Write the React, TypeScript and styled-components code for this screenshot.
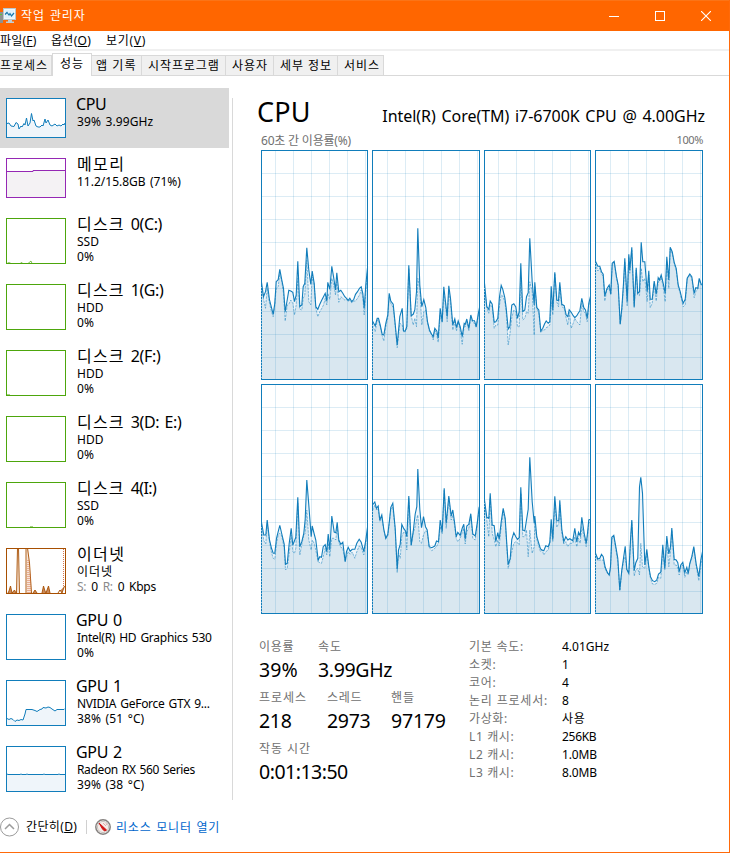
import React from 'react';
import styled, { createGlobalStyle } from 'styled-components';

const GlobalStyle = createGlobalStyle`
  * { box-sizing: border-box; }
  body { margin: 0; background: #fff; }
`;

const Window = styled.div`
  width: 730px;
  height: 853px;
  display: flex;
  flex-direction: column;
  overflow: hidden;
  background: #fff;
  border-right: 1px solid #ff6a0a;
  border-bottom: 1px solid #ff6a0a;
  font-family: 'Noto Sans', 'Noto Sans CJK KR', sans-serif;
  font-size: 12px;
  color: #000;
  white-space: pre;
`;

const Txt = styled.span<{ $ls?: number }>`
  letter-spacing: ${(p) => p.$ls ?? 0}px;
`;

const TitleBar = styled.header`
  height: 31px;
  flex: none;
  display: flex;
  align-items: center;
  background: #ff6600;
  border-top: 1px solid #fb7417;
  color: #fff;
`;

const TitleText = styled.h1`
  margin: 0 0 0 5px;
  flex: 1;
  font-size: 12px;
  font-weight: 400;
  line-height: 18px;
  letter-spacing: 0.9px;
  word-spacing: 1px;
`;

const Controls = styled.div`
  display: flex;
`;

const ControlButton = styled.button`
  width: 46px;
  height: 30px;
  padding: 0;
  border: 0;
  display: flex;
  align-items: center;
  justify-content: center;
  background: none;
`;

const MenuBar = styled.nav`
  height: 20px;
  flex: none;
  display: flex;
  border-bottom: 2px solid #f0f0f0;
  line-height: 19px;
`;

const MenuItem = styled.span<{ $w: number; $ls: number }>`
  width: ${(p) => p.$w}px;
  letter-spacing: ${(p) => p.$ls}px;
  flex: none;
`;

const Tabs = styled.div`
  height: 25px;
  flex: none;
  display: flex;
  align-items: flex-end;
  border-bottom: 1px solid #d9d9d9;
`;

const Tab = styled.div<{ $w: number; $active?: boolean; $pad: number; $ls: number }>`
  width: ${(p) => p.$w}px;
  height: ${(p) => (p.$active ? 23 : 20)}px;
  margin-bottom: ${(p) => (p.$active ? -1 : 0)}px;
  padding-left: ${(p) => p.$pad}px;
  border: 1px solid #d9d9d9;
  border-bottom: 0;
  border-left-width: ${(p) => (p.$active ? 1 : 0)}px;
  background: ${(p) => (p.$active ? '#fff' : '#f0f0f0')};
  letter-spacing: ${(p) => p.$ls}px;
  line-height: ${(p) => (p.$active ? 20 : 19)}px;
`;

const Body = styled.div`
  flex: none;
  height: 724px;
  display: flex;
`;

const Sidebar = styled.aside`
  width: 233px;
  flex: none;
  padding: 12px 3px 0 0;
  background: linear-gradient(#d9d9d9, #d9d9d9) 232px 22px / 1px 702px no-repeat;
`;

const Item = styled.div<{ $h: number; $selected?: boolean }>`
  width: 229px;
  height: ${(p) => p.$h}px;
  padding: 10px 0 0 6px;
  display: flex;
  gap: 11px;
  background: ${(p) => (p.$selected ? '#d9d9d9' : 'transparent')};
`;

const ItemText = styled.div`
  margin-top: -4px;
  flex: 1;
  word-spacing: 1.2px;
`;

const ItemTitle = styled.div<{ $ls: number; $shift?: number }>`
  margin-left: ${(p) => p.$shift ?? 0}px;
  font-size: 16px;
  line-height: 20px;
  letter-spacing: ${(p) => p.$ls}px;
`;

const Hangul = styled.span`
  letter-spacing: 1.2px;
  word-spacing: 0.5px;
`;

const ItemLine = styled.div<{ $ls: number }>`
  font-size: 12px;
  line-height: 15px;
  letter-spacing: ${(p) => p.$ls}px;
`;

const Rates = styled.span`
  word-spacing: 2.1px;
`;

const Muted = styled.span`
  color: #8a8a8a;
`;

const Svg = styled.svg`
  display: block;
  flex: none;
`;

const Main = styled.main`
  flex: 1;
  padding: 18px 0 0 28px;
`;

const Heading = styled.div`
  width: 446px;
  height: 38px;
  margin-left: -3px;
  display: flex;
  align-items: baseline;
  justify-content: space-between;
  line-height: 36px;
`;

const HeadingTitle = styled.h2`
  margin: 0 0 0 -1px;
  font-size: 27px;
  font-weight: 400;
  letter-spacing: 0.2px;
`;

const HeadingModel = styled.span`
  margin-right: -1px;
  font-size: 16px;
  word-spacing: 1.6px;
  letter-spacing: -0.04px;
`;

const AxisLabels = styled.div`
  width: 442px;
  height: 18px;
  display: flex;
  justify-content: space-between;
  color: #707070;
  line-height: 17px;
  font-size: 12px;
`;

const AxisMax = styled.span`
  font-size: 11px;
  line-height: 16px;
  letter-spacing: -0.4px;
`;

const Charts = styled.div`
  display: grid;
  grid-template-columns: 107px 108px 107px 108px;
  gap: 4px;
`;

const Details = styled.div`
  margin: 24px 0 0 -2px;
  display: flex;
`;

const Stats = styled.div`
  width: 210px;
`;

const StatRow = styled.div`
  height: 51px;
  display: flex;
`;

const Stat = styled.div<{ $w: number }>`
  width: ${(p) => p.$w}px;
`;

const StatLabel = styled.div<{ $ls: number }>`
  height: 18px;
  line-height: 17px;
  color: #707070;
  letter-spacing: ${(p) => p.$ls}px;
`;

const StatValue = styled.div<{ $ls: number }>`
  height: 30px;
  font-size: 19.5px;
  line-height: 27px;
  letter-spacing: ${(p) => p.$ls}px;
`;

const Facts = styled.div`
  display: grid;
  grid-template-columns: 93px auto;
  grid-auto-rows: 18px;
  line-height: 18px;
`;

const FactLabel = styled.span<{ $ls: number }>`
  color: #707070;
  letter-spacing: ${(p) => p.$ls}px;
`;

const Footer = styled.footer`
  flex: 1;
  display: flex;
  align-items: center;
  padding-top: 2px;
`;

const Fewer = styled.span`
  width: 61px;
  margin-left: 7px;
  letter-spacing: 0.35px;
  border-right: 1px solid #d0d0d0;
  height: 14px;
  line-height: 14px;
`;

const MonitorLink = styled.a`
  margin-left: 5px;
  color: #0066cc;
  letter-spacing: 0.8px;
  word-spacing: 0.8px;
`;

/* Samples are "x,utilisation,kernel" triples in thirds of a pixel. */
type ChartData = { w: number; ox: number; oy: number; grid: number; data: string };

const charts: ChartData[] = [
  { w: 107, ox: 18, oy: 15, grid: 14, data: '18,412,425 24,455,462 30,440,490 35,412,430 42,465,475 48,488,500 53,508,515 58,475,480 62,410,430 68,404,425 73,373,385 79,405,410 84,430,445 89,500,528 95,465,480 100,436,478 106,438,465 112,442,475 117,470,510 122,450,480 127,349,400 133,485,492 139,480,495 143,425,460 148,415,450 154,308,345 160,375,470 166,418,480 170,378,395 176,415,420 181,485,490 187,493,515 193,478,500 199,465,490 204,455,480 209,445,460 214,468,480 217,412,445 223,433,463 229,364,400 235,400,420 240,435,450 244,383,410 250,440,472 256,436,455 262,445,460 268,455,465 273,460,463 278,466,470 283,460,465 289,470,473 295,463,468 300,448,468 306,440,460 312,430,450 317,425,435 322,445,455 326,490,510 331,420,440 336,368,380' },
  { w: 108, ox: 15, oy: 15, grid: 15, data: '15,528,540 23,543,560 29,520,525 33,520,525 38,540,545 44,568,572 49,570,588 55,535,545 61,510,518 65,445,452 70,468,475 77,478,488 82,525,530 89,600,608 97,515,535 104,490,540 108,558,560 113,558,560 118,545,550 124,361,370 131,512,512 137,508,540 142,495,520 147,440,545 151,250,400 157,420,430 163,485,540 169,464,500 175,488,495 180,530,535 186,555,560 192,567,568 197,575,585 202,550,555 208,558,570 212,580,592 218,490,510 224,530,533 229,425,440 234,470,480 239,515,530 244,422,435 249,460,470 256,540,555 262,522,530 267,548,558 272,528,530 278,545,555 284,575,598 290,535,540 293,538,545 298,522,528 304,550,558 310,510,515 315,527,532 321,527,535 326,545,548 332,508,515 336,488,493' },
  { w: 107, ox: 15, oy: 15, grid: 14, data: '15,415,430 22,485,488 28,493,505 32,468,480 38,478,485 44,532,550 49,530,540 55,520,540 60,455,480 65,421,450 70,433,453 76,458,470 80,490,500 86,552,600 91,545,570 97,480,518 103,476,495 109,486,500 114,520,545 119,500,545 124,355,400 130,500,525 136,495,520 141,455,500 146,443,505 151,280,410 158,410,440 164,480,570 166,412,425 172,488,490 178,495,505 184,558,563 190,550,555 195,537,555 200,528,548 206,535,545 211,530,540 215,424,470 220,495,510 226,382,385 232,465,470 237,467,485 241,412,425 247,478,485 254,482,490 260,510,520 265,515,540 269,494,502 275,502,550 281,512,535 286,518,520 292,512,530 297,503,535 301,498,540 307,460,475 313,488,500 318,495,505 323,520,530 328,475,482 333,454,460' },
  { w: 108, ox: 12, oy: 15, grid: 15, data: '12,349,355 19,364,378 25,364,370 30,380,386 35,388,395 40,453,468 46,432,435 53,420,430 58,447,450 62,355,360 68,349,353 75,395,400 80,420,425 86,538,538 91,490,498 96,415,425 100,340,350 107,470,483 112,328,335 115,375,385 121,307,315 128,485,488 134,368,375 139,445,450 144,440,452 149,292,370 154,350,410 160,350,400 167,440,470 172,377,390 176,463,488 182,463,475 188,408,415 194,448,468 200,398,410 204,405,410 209,390,398 215,415,425 221,445,470 226,335,350 232,405,430 236,307,312 242,320,325 248,352,355 254,370,376 260,420,425 266,440,445 271,460,468 275,475,485 281,463,480 287,400,402 295,387,390 301,395,400 308,445,458 313,428,440 319,430,432 323,400,405 329,418,420 333,418,420' },
  { w: 107, ox: 18, oy: 12, grid: 14, data: '18,428,440 25,465,482 31,465,492 35,420,430 42,480,485 48,505,518 53,520,535 58,520,538 63,475,490 68,455,465 73,436,460 79,462,468 86,492,505 90,553,570 95,550,565 101,490,520 107,445,465 112,495,515 117,482,520 121,472,505 127,352,370 133,500,525 139,485,493 145,460,465 149,418,460 154,300,390 160,375,480 167,470,510 170,438,480 176,462,490 181,480,510 188,540,545 193,530,548 198,532,550 203,500,530 209,494,505 214,515,525 218,462,490 223,510,530 229,408,475 236,456,475 241,458,480 245,427,440 250,480,487 256,493,502 262,487,505 269,545,545 273,515,530 278,502,515 284,514,523 290,508,516 298,508,535 304,490,515 311,478,498 317,487,502 325,515,525 331,480,490 336,442,455' },
  { w: 108, ox: 351, oy: 12, grid: 15, data: '351,375,392 358,366,375 363,385,390 368,378,385 373,420,425 379,405,412 385,448,450 391,475,475 397,463,468 402,420,425 406,382,388 412,370,380 419,445,450 425,568,578 429,510,518 434,493,535 439,433,470 445,446,455 450,453,458 454,470,510 460,348,355 467,495,498 473,455,460 479,402,440 484,380,415 487,267,405 493,388,485 498,443,490 504,410,465 510,440,452 515,450,455 521,500,502 529,503,512 538,498,505 543,483,500 549,485,488 554,420,440 560,455,462 566,325,330 572,430,445 576,390,400 580,348,355 587,408,420 592,390,405 597,425,435 602,470,475 607,457,485 614,466,475 620,445,458 625,433,445 629,478,492 634,438,455 640,433,445 646,401,410 652,462,475 659,468,480 665,430,435 671,380,385' },
  { w: 107, ox: 15, oy: 12, grid: 14, data: '15,360,368 22,412,420 28,415,470 32,340,355 38,435,460 44,437,478 49,485,500 55,458,480 59,478,498 65,425,440 71,385,395 77,415,420 82,492,500 86,554,565 92,535,540 97,478,515 103,458,490 109,470,485 114,478,488 119,473,495 124,322,340 130,450,470 136,453,470 141,420,450 146,388,530 151,232,450 158,365,520 164,430,500 166,408,430 172,470,478 178,490,498 183,507,515 188,510,510 193,512,525 199,497,515 206,500,510 211,487,490 215,418,445 220,478,485 226,349,365 232,422,442 238,422,430 241,361,375 247,448,460 253,485,492 259,470,485 265,480,500 271,476,490 280,482,490 286,445,470 292,486,500 297,457,475 302,467,490 307,412,440 314,460,472 320,490,500 324,460,470 328,420,430 333,418,425' },
  { w: 108, ox: 348, oy: 12, grid: 15, data: '348,520,525 355,537,542 361,535,540 366,523,540 371,530,540 377,562,567 384,578,580 389,585,585 393,560,568 397,472,478 403,466,470 409,500,508 415,535,545 421,630,633 427,570,575 432,535,545 437,499,530 442,568,570 448,580,580 453,480,490 457,420,425 464,572,588 469,548,570 475,535,565 480,320,585 484,292,490 489,340,560 496,555,565 502,508,520 508,560,565 513,590,595 519,602,612 526,605,613 532,600,610 537,582,592 544,577,595 550,494,510 556,565,570 562,468,480 568,522,560 573,500,515 577,444,450 584,538,555 590,540,555 595,548,565 599,575,585 604,555,562 610,547,555 616,578,592 622,562,575 626,580,585 631,550,553 637,530,535 643,500,505 650,552,558 658,590,602 664,540,555 670,515,525' },
];

function CoreChart({ w, ox, oy, grid, data }: ChartData) {
  const h = 230;
  const pts = data.split(' ').map((s) => {
    const [x, u, k] = s.split(',').map(Number);
    return { x: Math.min((x - ox) / 3 + 0.5, w - 0.5), u: (u - oy) / 3, k: (k - oy) / 3 };
  });
  const util = pts.map((p) => `${p.x.toFixed(1)},${p.u.toFixed(1)}`).join(' ');
  const kern = pts.map((p) => `${p.x.toFixed(1)},${p.k.toFixed(1)}`).join(' ');
  const base = ` ${w - 0.5},${h} 0.5,${h}`;
  const vs = [0, 1, 2, 3, 4, 5].map((i) => grid + i * 18 + 0.5);
  const hs = [1, 2, 3, 4, 5, 6, 7, 8, 9].map((i) => i * 23 + 0.5);
  return (
    <Svg width={w} height={h} viewBox={`0 0 ${w} ${h}`}>
      <rect width={w} height={h} fill="#fff" />
      <polygon points={util + base} fill="#eff5fa" />
      <polygon points={kern + base} fill="#d9e7f0" />
      <g stroke="#117dbb" strokeOpacity="0.15" shapeRendering="crispEdges">
        {vs.map((x) => <line key={x} x1={x} x2={x} y1="1" y2={h - 1} />)}
        {hs.map((y) => <line key={y} x1="1" x2={w - 1} y1={y} y2={y} />)}
      </g>
      <polyline points={kern} fill="none" stroke="#117dbb" strokeOpacity="0.5" strokeDasharray="2.5 1" />
      <polyline points={util} fill="none" stroke="#117dbb" strokeWidth="1.1" />
      <rect x="0.5" y="0.5" width={w - 1} height={h - 1} fill="none" stroke="#117dbb" />
      <line x1="0.5" x2="0.5" y1={Math.round(pts[0].k)} y2={h - 1} stroke="#8fc0dd" strokeDasharray="1 2" />
    </Svg>
  );
}

type Thumb = { h: number; color: string; fill?: string; line?: string; extra?: React.ReactNode };

function Thumbnail({ h, color, fill, line, extra }: Thumb) {
  return (
    <Svg width="60" height={h} viewBox={`0 0 60 ${h}`}>
      <rect width="60" height={h} fill="#fff" />
      {line && fill && <polygon points={`${line} 59,${h} 1,${h}`} fill={fill} />}
      {line && <polyline points={line} fill="none" stroke={color} />}
      {extra}
      <rect x="0.5" y="0.5" width="59" height={h - 1} fill="none" stroke={color} />
    </Svg>
  );
}

const BLUE = '#117dbb';
const GREEN = '#4da60c';
const BROWN = '#a74f01';

type Entry = { name: string; title: React.ReactNode; ls: number; shift?: number; lines: [React.ReactNode, number][]; thumb: Thumb };

const disk = (drive: string, ls: number, kind: string, extra?: React.ReactNode): Entry => ({
  name: drive,
  title: <><Hangul>디스크 </Hangul>{drive}</>,
  ls,
  lines: [[kind, 0], ['0%', 0.14]],
  thumb: { h: 46, color: GREEN, extra },
});

const entries: Entry[] = [
  {
    name: 'cpu', title: 'CPU', ls: -0.4, shift: -1, lines: [['39% 3.99GHz', 0.1]],
    thumb: {
      h: 40, color: BLUE, fill: '#eff5fa',
      line: '1,25.5 3,25 5,28 8,28.5 10,24.5 12,26 13,31 15,28 16,29 18,25.5 19,27 20.5,20 22,28 24,25 25.5,15.5 27,23 28,22 30,28 32,29 34,29 36,27 37,28 39,21 40,25 42,22 44,27 46,28 49,26 51,28 53,27 55,28 57,26 58,27 59,25',
    },
  },
  {
    name: 'memory', title: '메모리', ls: 1.4, lines: [['11.2/15.8GB (71%)', 0]],
    thumb: { h: 40, color: '#9528b4', fill: '#f4f2f4', line: '1,13.5 27,13.5 27,12.5 59,12.5' },
  },
  disk('0(C:)', -0.35, 'SSD', <path d="M1 45.5L3 44.5L5 45.5M14 45.5L16 44.5L17 45.5M22 45.5L25 43L26 45.5" fill="none" stroke={GREEN} strokeOpacity="0.7" />),
  disk('1(G:)', -0.4, 'HDD'),
  disk('2(F:)', -0.3, 'HDD', <path d="M1 44.5H4" stroke={GREEN} strokeOpacity="0.5" />),
  disk('3(D: E:)', -0.3, 'HDD'),
  disk('4(I:)', -0.6, 'SSD', <path d="M24 44.5H27" stroke={GREEN} strokeOpacity="0.5" />),
  {
    name: 'ethernet', title: '이더넷', ls: 1.4,
    lines: [['이더넷', 0.9], [<Rates><Muted>S:</Muted> 0 <Muted>R:</Muted> 0 Kbps</Rates>, -0.3]],
    thumb: {
      h: 46, color: BROWN,
      extra: (
        <g fill="none" stroke={BROWN}>
          <path d="M10.5 45L11 0H12.5L13.5 45ZM20.5 45V0H22L24 18L26 45Z" fill="#f7e6da" stroke="none" />
          <path d="M10.5 45L11.5 0M12.5 0L13.5 45M20 45V0M21.5 0L23.5 15L25.5 45" strokeWidth="0.9" />
          <path d="M22 45V12M24 45V25M57.5 1V38" stroke="#d4663a" strokeDasharray="1 1" strokeWidth="0.9" />
          <path d="M2 45L3 43L4.5 38L6 45L8.5 42L10 45M27 45L29 42L31 45M36 45L37.5 38L39 43L40 45L42.5 38L44 45M52 45L54 42L56 45L58.5 38" fill="#c98a5b" strokeWidth="0.9" />
        </g>
      ),
    },
  },
  { name: 'gpu0', title: 'GPU 0', ls: -0.35, shift: -1, lines: [['Intel(R) HD Graphics 530', -0.27], ['0%', 0.14]], thumb: { h: 46, color: BLUE } },
  {
    name: 'gpu1', title: 'GPU 1', ls: -0.35, shift: -1, lines: [['NVIDIA GeForce GTX 9...', -0.28], ['38% (51 °C)', 0.12]],
    thumb: {
      h: 46, color: BLUE, fill: '#eff5fa',
      line: '1,38.5 3,39.5 5,38.5 7,39.5 9,41.5 11,40 13,40.5 15,39.5 17,40 18,37 19,34 20,29.5 26,29.5 29,30.5 31,31.5 34,29.5 36,29 37,27.5 40,28 42,27 44,27.5 46,29 49,31 51,29.5 58,29.5 59,28.5',
    },
  },
  {
    name: 'gpu2', title: 'GPU 2', ls: -0.35, shift: -1, lines: [['Radeon RX 560 Series', -0.36], ['39% (38 °C)', 0.12]],
    thumb: { h: 46, color: BLUE, fill: '#eff5fa', line: '1,28 2,28.5 14,28.5 15,28 16,28.5 20,28.5 21,28 22,28.5 37,28.5 38,28 39,28.5 52,28.5 53,28 54,28.5 59,28.5' },
  },
];

const facts: [string, number, string, number][] = [
  ['기본 속도:', 0.74, '4.01GHz', 0],
  ['소켓:', 0.71, '1', 0],
  ['코어:', 0.71, '4', 0],
  ['논리 프로세서:', 0.81, '8', 0],
  ['가상화:', 0.63, '사용', 0.6],
  ['L1 캐시:', 0.63, '256KB', -0.3],
  ['L2 캐시:', 0.63, '1.0MB', -0.15],
  ['L3 캐시:', 0.63, '8.0MB', -0.15],
];

function AppIcon() {
  return (
    <Svg width="16" height="16" viewBox="0 0 16 16">
      <path d="M0 4h3v11H0z" fill="#8e9291" />
      <path d="M0 6h2v1H0z" fill="#58c33c" />
      <rect x="3.5" y="0.5" width="12" height="11" fill="#f1f5f7" stroke="#b9c6cc" />
      <rect x="5" y="2" width="9" height="8" fill="#dff1fb" />
      <path d="M5 6.5L7 4.5L9 7L10 5.5L11.5 8L14 5" fill="none" stroke="#1778ac" strokeWidth="1.2" />
      <path d="M8 12h4v1.5h2V15H6v-1.5h2z" fill="#c2ced2" />
    </Svg>
  );
}

function ChevronIcon() {
  return (
    <Svg width="19" height="20" viewBox="0 0 19 20">
      <circle cx="9.5" cy="10" r="9" fill="#fff" stroke="#9b9b9b" />
      <path d="M5 12L9.5 7.5L14 12" fill="none" stroke="#9b9b9b" strokeWidth="1.5" />
    </Svg>
  );
}

const GaugeSvg = styled(Svg)`
  margin-left: 8px;
`;

function GaugeIcon() {
  return (
    <GaugeSvg width="16" height="16" viewBox="0 0 16 16">
      <circle cx="8" cy="8" r="7.2" fill="#fff" stroke="#85817f" strokeWidth="1.5" />
      <circle cx="8" cy="8" r="5.6" fill="#f4ece9" stroke="#c9c3bf" />
      <path d="M4 4L11.5 11L9.5 12L7.5 10Z" fill="#cf1515" stroke="#cf1515" />
      <path d="M8 4L11 7M11 4.5L12 6" stroke="#d99" strokeWidth="0.8" />
    </GaugeSvg>
  );
}

export default function App() {
  return (
    <>
      <GlobalStyle />
      <Window>
        <TitleBar>
          <AppIcon />
          <TitleText>작업 관리자</TitleText>
          <Controls>
            <ControlButton aria-label="Minimize">
              <Svg width="10" height="10"><path d="M0 5.5H10" stroke="#fff" /></Svg>
            </ControlButton>
            <ControlButton aria-label="Maximize">
              <Svg width="10" height="10"><rect x="0.5" y="0.5" width="9" height="9" fill="none" stroke="#fff" /></Svg>
            </ControlButton>
            <ControlButton aria-label="Close">
              <Svg width="10" height="10"><path d="M0 0L10 10M10 0L0 10" stroke="#fff" strokeWidth="1.1" /></Svg>
            </ControlButton>
          </Controls>
        </TitleBar>
        <MenuBar>
          <MenuItem $w={51} $ls={0.2}>파일(<u>F</u>)</MenuItem>
          <MenuItem $w={55} $ls={0.3}>옵션(<u>O</u>)</MenuItem>
          <MenuItem $w={60} $ls={0.7}>보기(<u>V</u>)</MenuItem>
        </MenuBar>
        <Tabs>
          <Tab $w={52} $pad={0} $ls={0.96}>프로세스</Tab>
          <Tab $w={40} $pad={7} $ls={0.96} $active>성능</Tab>
          <Tab $w={50} $pad={4} $ls={1.1}>앱 기록</Tab>
          <Tab $w={84} $pad={6} $ls={0.9}>시작프로그램</Tab>
          <Tab $w={48} $pad={6} $ls={1}>사용자</Tab>
          <Tab $w={64} $pad={6} $ls={0.95}>세부 정보</Tab>
          <Tab $w={46} $pad={6} $ls={1}>서비스</Tab>
        </Tabs>
        <Body>
          <Sidebar>
            {entries.map((e, i) => (
              <Item key={e.name} $h={i < 2 ? 60 : 66} $selected={i === 0}>
                <Thumbnail {...e.thumb} />
                <ItemText>
                  <ItemTitle $ls={e.ls} $shift={e.shift}>{e.title}</ItemTitle>
                  {e.lines.map(([text, ls], k) => <ItemLine key={k} $ls={ls}>{text}</ItemLine>)}
                </ItemText>
              </Item>
            ))}
          </Sidebar>
          <Main>
            <Heading>
              <HeadingTitle>CPU</HeadingTitle>
              <HeadingModel>Intel(R) Core(TM) i7-6700K CPU @ 4.00GHz</HeadingModel>
            </Heading>
            <AxisLabels>
              <Txt $ls={-0.2}>60초 간 이용률(%)</Txt>
              <AxisMax>100%</AxisMax>
            </AxisLabels>
            <Charts>
              {charts.map((c, i) => <CoreChart key={i} {...c} />)}
            </Charts>
            <Details>
              <Stats>
                <StatRow>
                  <Stat $w={59}><StatLabel $ls={0.71}>이용률</StatLabel><StatValue $ls={0.1}>39%</StatValue></Stat>
                  <Stat $w={90}><StatLabel $ls={0.96}>속도</StatLabel><StatValue $ls={-0.35}>3.99GHz</StatValue></Stat>
                </StatRow>
                <StatRow>
                  <Stat $w={68}><StatLabel $ls={0.96}>프로세스</StatLabel><StatValue $ls={-0.3}>218</StatValue></Stat>
                  <Stat $w={64}><StatLabel $ls={0.71}>스레드</StatLabel><StatValue $ls={-0.3}>2973</StatValue></Stat>
                  <Stat $w={70}><StatLabel $ls={0.96}>핸들</StatLabel><StatValue $ls={-0.2}>97179</StatValue></Stat>
                </StatRow>
                <StatRow>
                  <Stat $w={120}><StatLabel $ls={0.94}>작동 시간</StatLabel><StatValue $ls={-0.5}>0:01:13:50</StatValue></Stat>
                </StatRow>
              </Stats>
              <Facts>
                {facts.map(([label, ls, value, vls]) => (
                  <React.Fragment key={label}>
                    <FactLabel $ls={ls}>{label}</FactLabel>
                    <Txt $ls={vls}>{value}</Txt>
                  </React.Fragment>
                ))}
              </Facts>
            </Details>
          </Main>
        </Body>
        <Footer>
          <ChevronIcon />
          <Fewer>간단히(<u>D</u>)</Fewer>
          <GaugeIcon />
          <MonitorLink>리소스 모니터 열기</MonitorLink>
        </Footer>
      </Window>
    </>
  );
}
